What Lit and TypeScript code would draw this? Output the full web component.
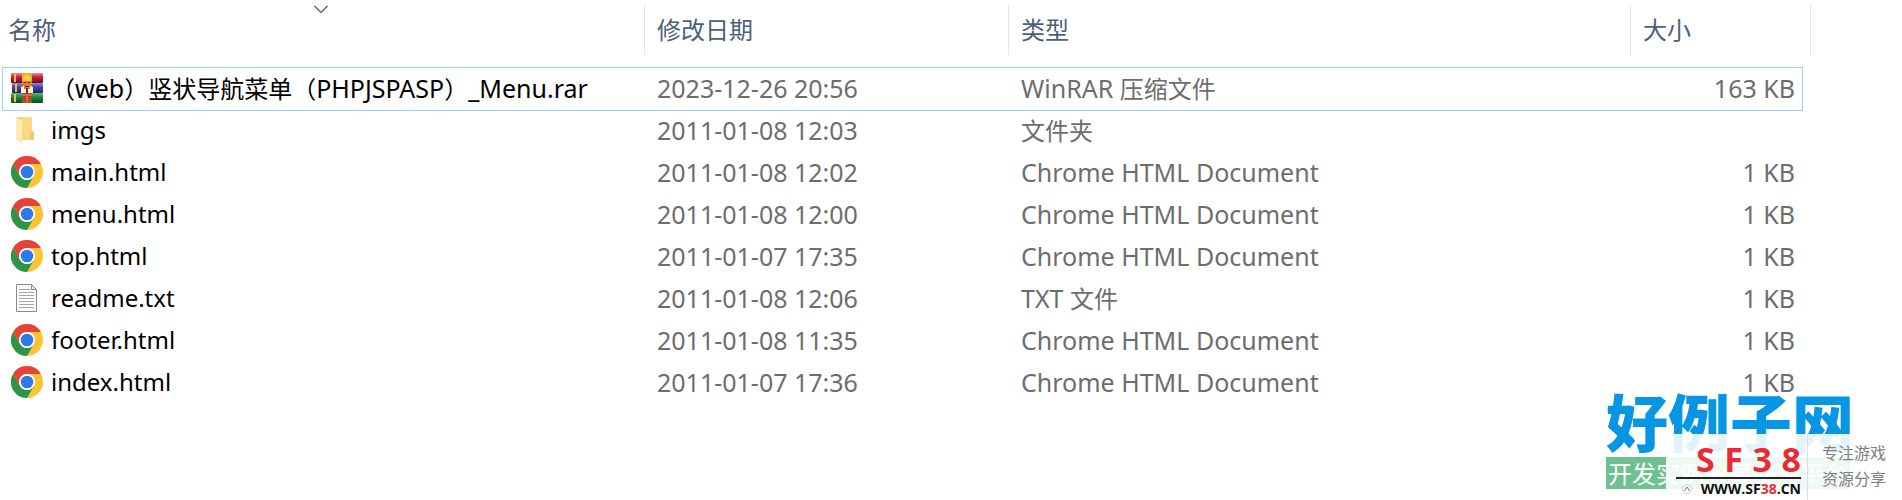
import { LitElement, html, svg, css } from "lit";
import { customElement, property, state } from "lit/decorators.js";
import { classMap } from "lit/directives/class-map.js";

type Kind = "rar" | "folder" | "chrome" | "text";

interface Entry {
  name: string;
  date: string;
  type: string;
  size: string;
  kind: Kind;
}

const entries: Entry[] = [
  { name: "（web）竖状导航菜单（PHPJSPASP）_Menu.rar", date: "2023-12-26 20:56", type: "WinRAR 压缩文件", size: "163 KB", kind: "rar" },
  { name: "imgs", date: "2011-01-08 12:03", type: "文件夹", size: "", kind: "folder" },
  { name: "main.html", date: "2011-01-08 12:02", type: "Chrome HTML Document", size: "1 KB", kind: "chrome" },
  { name: "menu.html", date: "2011-01-08 12:00", type: "Chrome HTML Document", size: "1 KB", kind: "chrome" },
  { name: "top.html", date: "2011-01-07 17:35", type: "Chrome HTML Document", size: "1 KB", kind: "chrome" },
  { name: "readme.txt", date: "2011-01-08 12:06", type: "TXT 文件", size: "1 KB", kind: "text" },
  { name: "footer.html", date: "2011-01-08 11:35", type: "Chrome HTML Document", size: "1 KB", kind: "chrome" },
  { name: "index.html", date: "2011-01-07 17:36", type: "Chrome HTML Document", size: "1 KB", kind: "chrome" },
];

const HAN = /[\u3000-\u9fff\uff00-\uffef]/;

// Chinese runs are set one size below the Latin text beside them.
const mixed = (text: string) =>
  text
    .split(/([\u3000-\u9fff\uff00-\uffef]+)/)
    .filter(Boolean)
    .map((run) => (HAN.test(run) ? html`<span class="han">${run}</span>` : run));

const glyphs = {
  rar: svg`
    <defs>
      <linearGradient id="r" x2="0" y2="1"><stop offset="0" stop-color="#f08aa0"/><stop offset=".4" stop-color="#c81e40"/><stop offset="1" stop-color="#6e0a20"/></linearGradient>
      <linearGradient id="b" x2="0" y2="1"><stop offset="0" stop-color="#8d8ee0"/><stop offset=".4" stop-color="#4648a8"/><stop offset="1" stop-color="#22235e"/></linearGradient>
      <linearGradient id="g" x2="0" y2="1"><stop offset="0" stop-color="#5cc07a"/><stop offset=".4" stop-color="#1c8a42"/><stop offset="1" stop-color="#0a4a20"/></linearGradient>
    </defs>
    <rect x="0" y="1" width="32" height="10" rx="1" fill="url(#r)"/>
    <rect x="1" y="11" width="31" height="10" rx="1" fill="url(#b)"/>
    <rect x="0" y="21" width="32" height="10" rx="1" fill="url(#g)"/>
    <path d="M3 2h2v8H3zM4 12h2v8H4zM3 22h2v8H3z" fill="#f2c233"/>
    <path d="M11 1h10v7H11z" fill="#e8b32c"/>
    <path d="M11 21h10v10H11z" fill="#a84c26"/>
    <path d="M11 22h10v2H11zM15 24h2v7h-2z" fill="#cf6e3c"/>
    <path d="M12 8c0-4 2-5 4-5s4 1 4 5l2 1H10z" fill="#f6cf45"/>
    <path d="M11 9h10v5l-2 6h-6l-2-6z" fill="#dd7d2c"/>
    <path d="M13 10h2v1h-2zM17 10h2v1h-2zM14 14h4v1h-4z" fill="#5a2c10"/>
    <path d="M10 15l3-1v7h-3zM22 15l-3-1v7h3z" fill="#f4f1ee"/>
    <path d="M13 17h2v4h-2zM17 17h2v4h-2z" fill="#f4f1ee"/>
    <path d="M15 16h2v5h-2z" fill="#733014"/>`,
  folder: svg`
    <path d="M5 3h16v14l2 1v8H9L5 20z" fill="#f3d57b"/>
    <path d="M11 3h10v14l2 1v8H11z" fill="#f8da84"/>
    <path d="M5 3l6 4v23l-6-4z" fill="#fdebb4"/>
    <path d="M19 17h2l2 1v8h-4z" fill="#eecb6c"/>`,
  chrome: svg`
    <circle cx="16" cy="16" r="16" fill="#fcc332"/>
    <path d="M2.14 8A16 16 0 0 0 16 32L22.93 20A8 8 0 0 1 9.07 20z" fill="#2c9549"/>
    <path d="M2.14 8A16 16 0 0 1 29.86 8H16A8 8 0 0 0 9.07 20z" fill="#e3433a"/>
    <circle cx="16" cy="16" r="8" fill="#fff"/>
    <circle cx="16" cy="16" r="6.3" fill="#3079ea"/>`,
  text: svg`
    <path d="M5.500 2.500h15l5 5v22h-20z" fill="#fafafa" stroke="#8b8b8b"/>
    <path d="M20.500 2.500v5h5z" fill="#e4e4e4" stroke="#8b8b8b"/>
    <path d="M8 7.500h11M8 10.500h15M8 13.500h15M8 16.500h15M8 19.500h15M8 22.500h15M8 25.500h15" stroke="#a6a6a6" fill="none"/>`,
};

@customElement("file-icon")
class FileIcon extends LitElement {
  @property() kind: Kind = "text";

  static styles = css`
    :host { display: block; flex: none; width: 32px; height: 32px; }
    .glyph { display: block; width: 100%; height: 100%; }
  `;

  render() {
    return html`<svg class="glyph" viewBox="0 0 32 32" aria-hidden="true">${glyphs[this.kind]}</svg>`;
  }
}

@customElement("site-badge")
class SiteBadge extends LitElement {
  static styles = css`
    :host { display: block; width: 296px; height: 110px; }
    .brand { font: 900 62px/60px "Noto Sans CJK SC", sans-serif; color: #0796e3; white-space: nowrap; }
    .slogan { display: inline-block; margin-top: 7px; padding: 0 2px; background: #6fc191; color: #fff; font: 24px/32px "Noto Sans CJK SC", sans-serif; white-space: nowrap; }
    .panel { position: absolute; right: 0; bottom: 0; display: flex; width: 236px; height: 66px; background: rgba(255, 255, 255, 0.89); }
    .site { flex: none; width: 125px; padding: 8px 6px 0 10px; border-right: 1px solid #ddd; }
    .code { display: flex; justify-content: space-between; padding-left: 20px; font: 700 34px/34px "Open Sans", sans-serif; color: #ea2b33; }
    .rule { height: 2px; margin-top: 1px; background: #222; }
    .address { display: flex; justify-content: space-between; align-items: center; padding-left: 6px; font: 700 14px/20px "Open Sans", sans-serif; color: #111; }
    .mark { width: 10px; height: 10px; }
    .hot { color: #ea2b33; }
    .motto { margin: 5px 0 0 14px; font: 16px/26px "Noto Sans CJK SC", sans-serif; color: #808080; white-space: nowrap; }
  `;

  render() {
    return html`
      <div class="brand">好例子网</div>
      <div class="slogan">开发实例分享交流平台</div>
      <div class="panel">
        <div class="site">
          <div class="code"><span>S</span><span>F</span><span>3</span><span>8</span></div>
          <div class="rule"></div>
          <div class="address">
            <svg class="mark" viewBox="0 0 10 10" aria-hidden="true"><circle cx="5" cy="5" r="4.500" fill="none" stroke="#ccc"/><path d="M2.500 7L5 3l2.500 4" fill="none" stroke="#777"/></svg>
            <span>WWW.SF<span class="hot">38</span>.CN</span>
          </div>
        </div>
        <div class="motto">专注游戏<br />资源分享</div>
      </div>
    `;
  }
}

@customElement("app-root")
class AppRoot extends LitElement {
  @state() private selected = 0;

  static styles = css`
    :host { display: block; position: relative; min-height: 100vh; background: #fff; font: 25px/40px "Noto Sans", "Noto Sans CJK SC", sans-serif; color: #6d6d6d; overflow: hidden; }
    .files { display: block; padding-right: 91px; }
    .head, .body { display: block; }
    .columns { display: grid; grid-template-columns: minmax(0, 1fr) 364px 622px 180px; padding: 4px 0 13px; }
    .column { position: relative; padding: 0; border-right: 1px solid #e5e5e5; text-align: left; }
    .sort { display: block; width: 100%; height: 51px; padding: 0 12px 2px; border: 0; background: none; color: #4c607a; font: 24px/48px "Noto Sans CJK SC", sans-serif; text-align: left; }
    .column:first-child .sort { padding-left: 8px; }
    .chevron { position: absolute; top: 0; left: 50%; width: 16px; height: 10px; margin-left: -9px; }
    .row { display: grid; grid-template-columns: minmax(0, 1fr) 364px 622px 171px; grid-template-rows: 42px; margin: 0 9px 0 3px; }
    .row.selected { outline: 1px solid #99d1ff; }
    .cell { padding: 0 12px; white-space: nowrap; }
    .name { display: flex; align-items: flex-start; gap: 8px; padding: 0 8px; color: #000; font-size: 24px; }
    .name.wide { font-size: 25px; }
    .icon { margin-top: 4px; }
    .size { padding-right: 7px; text-align: right; }
    .han { font-size: 24px; line-height: 1; }
    .badge { position: absolute; right: 0; bottom: 0; }
  `;

  render() {
    return html`
      <table class="files">
        <thead class="head">
          <tr class="columns">
            <th class="column" aria-sort="ascending">
              <button class="sort">名称</button>
              <svg class="chevron" viewBox="0 0 16 10" aria-hidden="true"><path d="M1.500 2L8 8.500L14.500 2" fill="none" stroke="#555" stroke-width="1.200"/></svg>
            </th>
            <th class="column"><button class="sort">修改日期</button></th>
            <th class="column"><button class="sort">类型</button></th>
            <th class="column"><button class="sort">大小</button></th>
          </tr>
        </thead>
        <tbody class="body">
          ${entries.map(
            (entry, index) => html`
              <tr class=${classMap({ row: true, selected: index === this.selected })} @click=${() => (this.selected = index)}>
                <td class=${classMap({ cell: true, name: true, wide: HAN.test(entry.name) })}>
                  <file-icon class="icon" .kind=${entry.kind}></file-icon><span>${mixed(entry.name)}</span>
                </td>
                <td class="cell">${mixed(entry.date)}</td>
                <td class="cell">${mixed(entry.type)}</td>
                <td class="cell size">${entry.size}</td>
              </tr>
            `
          )}
        </tbody>
      </table>
      <site-badge class="badge"></site-badge>
    `;
  }
}
